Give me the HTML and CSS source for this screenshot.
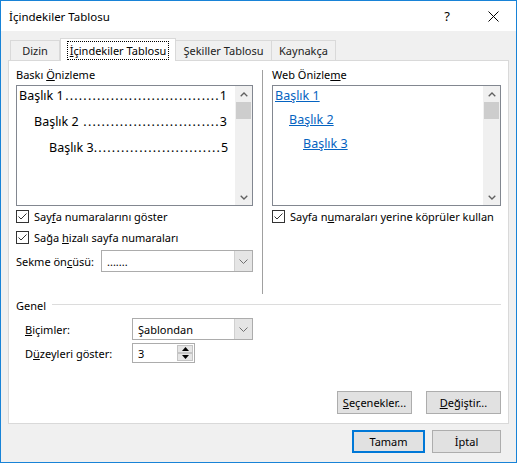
FILE: index.html
```html
<!DOCTYPE html>
<html lang="tr">
<head>
<meta charset="utf-8">
<title>İçindekiler Tablosu</title>
<link rel="stylesheet" href="styles.css">
</head>
<body>
<div class="window">
  <div class="titlebar">
    <div class="title">İçindekiler Tablosu</div>
    <div class="cap-btn help">?</div>
    <div class="cap-btn close"><svg width="11" height="11" viewBox="0 0 11 11"><path d="M0.5 0.5L10.5 10.5M10.5 0.5L0.5 10.5" stroke="#000" stroke-width="1" fill="none"/></svg></div>
  </div>
  <div class="content">
    <div class="tabs">
      <div class="tab tab-dizin">Dizin</div>
      <div class="tab tab-active"><span class="focus"><u>İ</u>çindekiler Tablosu</span></div>
      <div class="tab tab-sekil">Şekiller Tablosu</div>
      <div class="tab tab-kaynak">Kaynakça</div>
    </div>
    <div class="panel">
      <div class="top">
        <div class="col col-left">
          <div class="label">Baskı <u>Ö</u>nizleme</div>
          <div class="preview">
            <div class="pv-body print">
              <div class="toc l1"><span class="nm">Başlık 1</span><span class="dots">..................................</span><span class="pg">1</span></div>
              <div class="toc l2"><span class="nm">Başlık 2</span><span class="dots">..............................</span><span class="pg">3</span></div>
              <div class="toc l3"><span class="nm">Başlık 3</span><span class="dots">............................</span><span class="pg">5</span></div>
            </div>
            <div class="scrollbar">
              <div class="sb-btn"><svg width="8" height="5" viewBox="0 0 8 5"><path d="M0.7 4.3L4 1L7.3 4.3" stroke="#606060" stroke-width="1.3" fill="none"/></svg></div>
              <div class="thumb"></div>
              <div class="sb-fill"></div>
              <div class="sb-btn"><svg width="8" height="5" viewBox="0 0 8 5"><path d="M0.7 0.7L4 4L7.3 0.7" stroke="#606060" stroke-width="1.3" fill="none"/></svg></div>
            </div>
          </div>
          <div class="check"><svg class="cb" width="13" height="13" viewBox="0 0 13 13"><rect x="0.5" y="0.5" width="12" height="12" fill="#fff" stroke="#333"/><path d="M2.5 6.5L5 9L10.5 3.5" fill="none" stroke="#333" stroke-width="1"/></svg><span>Say<u>f</u>a numaralarını göster</span></div>
          <div class="check"><svg class="cb" width="13" height="13" viewBox="0 0 13 13"><rect x="0.5" y="0.5" width="12" height="12" fill="#fff" stroke="#333"/><path d="M2.5 6.5L5 9L10.5 3.5" fill="none" stroke="#333" stroke-width="1"/></svg><span>Sağa <u>h</u>izalı sayfa numaraları</span></div>
          <div class="leader-row">
            <span>Sekme ön<u>c</u>üsü:</span>
            <div class="combo combo-leader">
              <span class="combo-text">.......</span>
              <span class="drop"><svg width="9" height="5" viewBox="0 0 9 5"><path d="M0.5 0.5L4.5 4.5L8.5 0.5" stroke="#707070" stroke-width="1" fill="none"/></svg></span>
            </div>
          </div>
        </div>
        <div class="vsep"></div>
        <div class="col col-right">
          <div class="label">Web Önizle<u>m</u>e</div>
          <div class="preview">
            <div class="pv-body web">
              <a class="lnk w1">Başlık 1</a>
              <a class="lnk w2">Başlık 2</a>
              <a class="lnk w3">Başlık 3</a>
            </div>
            <div class="scrollbar">
              <div class="sb-btn"><svg width="8" height="5" viewBox="0 0 8 5"><path d="M0.7 4.3L4 1L7.3 4.3" stroke="#606060" stroke-width="1.3" fill="none"/></svg></div>
              <div class="thumb"></div>
              <div class="sb-fill"></div>
              <div class="sb-btn"><svg width="8" height="5" viewBox="0 0 8 5"><path d="M0.7 0.7L4 4L7.3 0.7" stroke="#606060" stroke-width="1.3" fill="none"/></svg></div>
            </div>
          </div>
          <div class="check"><svg class="cb" width="13" height="13" viewBox="0 0 13 13"><rect x="0.5" y="0.5" width="12" height="12" fill="#fff" stroke="#333"/><path d="M2.5 6.5L5 9L10.5 3.5" fill="none" stroke="#333" stroke-width="1"/></svg><span>Sayfa n<u>u</u>maraları yerine köprüler kullan</span></div>
        </div>
      </div>
      <div class="genel"><span>Genel</span><span class="hline"></span></div>
      <div class="form-row row-bicim">
        <span class="flabel"><u>B</u>içimler:</span>
        <div class="combo combo-bicim">
          <span class="combo-text">Şablondan</span>
          <span class="drop"><svg width="9" height="5" viewBox="0 0 9 5"><path d="M0.5 0.5L4.5 4.5L8.5 0.5" stroke="#707070" stroke-width="1" fill="none"/></svg></span>
        </div>
      </div>
      <div class="form-row row-duzey">
        <span class="flabel">D<u>ü</u>zeyleri göster:</span>
        <div class="spin">
          <span class="combo-text">3</span>
          <span class="spin-btns">
            <span class="spin-b"><svg width="7" height="4" viewBox="0 0 7 4"><path d="M0 4L3.5 0L7 4Z" fill="#000"/></svg></span>
            <span class="spin-b"><svg width="7" height="4" viewBox="0 0 7 4"><path d="M0 0L3.5 4L7 0Z" fill="#000"/></svg></span>
          </span>
        </div>
      </div>
      <div class="panel-buttons">
        <div class="btn"><u>S</u>eçenekler...</div>
        <div class="btn"><u>D</u>eğiştir...</div>
      </div>
    </div>
    <div class="footer">
      <div class="btn btn-default">Tamam</div>
      <div class="btn btn-cancel">İptal</div>
    </div>
  </div>
</div>
</body>
</html>
```

FILE: styles.css
```css
* { box-sizing: border-box; margin: 0; padding: 0; }
html, body { width: 517px; height: 463px; overflow: hidden; }
body {
  font-family: "Noto Sans", "Open Sans", sans-serif;
  font-size: 11px;
  color: #000;
  background: #f0f0f0;
}
u { text-decoration: underline; text-underline-offset: 1px; }

.window {
  width: 517px;
  height: 463px;
  border: 1px solid #1883d7;
  display: flex;
  flex-direction: column;
  background: #f0f0f0;
}

.titlebar {
  height: 30px;
  flex: none;
  background: #fff;
  display: flex;
  align-items: center;
}
.title { flex: 1; padding-left: 8px; font-size: 11.5px; }
.cap-btn {
  width: 46px;
  height: 30px;
  display: flex;
  align-items: center;
  justify-content: center;
}
.help { font-size: 13px; }

.content {
  flex: 1;
  display: flex;
  flex-direction: column;
  padding: 7px 7px 0 7px;
}

.tabs {
  height: 22px;
  display: flex;
  align-items: flex-end;
  padding-left: 2px;
}
.tab {
  height: 20px;
  border: 1px solid #d9d9d9;
  border-bottom: none;
  background: #f0f0f0;
  display: flex;
  align-items: center;
  justify-content: center;
  color: #222;
}
.tab-dizin { width: 50px; }
.tab-active {
  width: 116px;
  height: 23px;
  background: #fff;
  margin-bottom: -1px;
  position: relative;
  z-index: 1;
  color: #000;
}
.tab-sekil { width: 97px; margin-left: -1px; }
.tab-kaynak { width: 65px; margin-left: -1px; }
.focus {
  outline: 1px dotted #000;
  outline-offset: 0;
  padding: 0 2px;
  line-height: 17px;
}

.panel {
  height: 364px;
  flex: none;
  border: 1px solid #d9d9d9;
  background: #fff;
  display: flex;
  flex-direction: column;
}

.top {
  height: 233px;
  display: flex;
  padding: 6px 7px 0 7px;
}
.col { display: flex; flex-direction: column; }
.col-left { width: 237px; }
.col-right { width: 229px; }
.vsep {
  width: 1px;
  background: #a0a0a0;
  margin: 3px 9px 0 9px;
}

.label { height: 16px; line-height: 16px; margin-bottom: 2px; }

.preview {
  height: 121px;
  border: 1px solid #828790;
  display: flex;
  background: #fff;
}
.pv-body { flex: 1; display: flex; flex-direction: column; overflow: hidden; }
.print { padding: 0 8px 0 2px; gap: 6px; }
.toc {
  display: flex;
  height: 20px;
  line-height: 20px;
  font-size: 12.5px;
  white-space: nowrap;
}
.l2 { margin-left: 15px; }
.l3 { margin-left: 30px; }
.dots {
  flex: none;
  margin-left: auto;
  letter-spacing: 1.2px;
}
.pg { flex: none; }

.web { padding: 0 0 0 2px; gap: 4px; }
.lnk {
  height: 20px;
  line-height: 20px;
  font-size: 12.5px;
  color: #0563c1;
  text-decoration: underline;
  align-self: flex-start;
}
.w2 { margin-left: 14px; }
.w3 { margin-left: 28px; }

.scrollbar {
  width: 17px;
  background: #f0f0f0;
  display: flex;
  flex-direction: column;
}
.sb-btn {
  height: 16px;
  display: flex;
  align-items: center;
  justify-content: center;
}
.thumb { height: 17px; margin: 0 1px; background: #cdcdcd; }
.sb-fill { flex: 1; }

.check {
  height: 21px;
  display: flex;
  align-items: center;
  gap: 5px;
}
.cb { flex: none; }

.leader-row {
  margin-top: 2px;
  height: 22px;
  display: flex;
  align-items: center;
}

.combo {
  height: 22px;
  border: 1px solid #acacac;
  background: #fff;
  display: flex;
  align-items: center;
}
.combo-leader { width: 152px; margin-left: auto; }
.combo-bicim { width: 121px; }
.combo-text { flex: 1; padding-left: 5px; }
.drop {
  width: 18px;
  height: 100%;
  background: #e5e5e5;
  border-left: 1px solid #d0d0d0;
  display: flex;
  align-items: center;
  justify-content: center;
}

.genel {
  margin-top: 3px;
  height: 16px;
  padding: 0 7px;
  display: flex;
  align-items: center;
}
.hline { flex: 1; height: 1px; background: #dcdcdc; margin-left: 6px; margin-top: -1px; }

.form-row {
  display: flex;
  align-items: center;
  padding-left: 16px;
}
.row-bicim { margin-top: 5px; height: 22px; }
.row-duzey { margin-top: 3px; height: 20px; }
.flabel { width: 107px; }

.spin {
  width: 63px;
  height: 20px;
  border: 1px solid #acacac;
  background: #fff;
  display: flex;
  align-items: center;
}
.spin-btns {
  width: 17px;
  height: 100%;
  display: flex;
  flex-direction: column;
  padding: 1px 1px 1px 0;
}
.spin-b {
  flex: 1;
  background: #e5e5e5;
  border: 1px solid #c4c4c4;
  display: flex;
  align-items: center;
  justify-content: center;
}

.panel-buttons {
  margin-top: auto;
  padding: 0 7px 9px 0;
  display: flex;
  justify-content: flex-end;
  gap: 14px;
}

.btn {
  width: 75px;
  height: 23px;
  background: #e1e1e1;
  border: 1px solid #adadad;
  display: flex;
  align-items: center;
  justify-content: center;
}

.footer {
  margin-top: 6px;
  padding-right: 8px;
  display: flex;
  justify-content: flex-end;
  gap: 7px;
}
.btn-default {
  width: 73px;
  border: 2px solid #0078d7;
}
.btn-cancel { width: 69px; }
```
